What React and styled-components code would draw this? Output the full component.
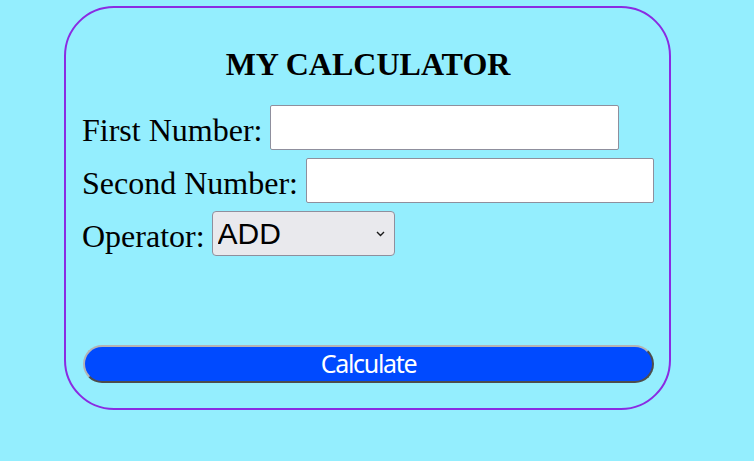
import React from "react";
import styled, { createGlobalStyle } from "styled-components";

const Global = createGlobalStyle`
  html, body { margin: 0; padding: 0; background: #94eefe; }
  body { font-family: "Liberation Serif", "Times New Roman", serif; }
  #root { min-height: 461px; }
  * { box-sizing: border-box; }
`;

const Page = styled.div`
  padding: 6px 0 0 64px;
  height: 461px;
`;

const Card = styled.form`
  width: 607px;
  height: 404px;
  border: 2px solid #8a2be2;
  border-radius: 50px;
  padding: 38px 15px 0 16px;
  display: flex;
  flex-direction: column;
`;

const Title = styled.h1`
  margin: 0 0 22px;
  font-family: "Liberation Serif", "Times New Roman", serif;
  font-size: 32px;
  line-height: 37px;
  font-weight: bold;
  text-align: center;
  color: #000;
`;

const Row = styled.div`
  display: flex;
  align-items: center;
  gap: ${(p) => p.$gap || 8}px;
  height: 45px;
  margin-bottom: ${(p) => p.$after || 8}px;
`;

const Label = styled.label`
  font-family: "Liberation Serif", "Times New Roman", serif;
  font-size: 32px;
  line-height: 37px;
  padding-top: 5px;
  color: #000;
  white-space: nowrap;
`;

const Input = styled.input`
  width: ${(p) => p.$w}px;
  height: 45px;
  border: 1px solid #8f8f9d;
  border-radius: 2px;
  background: #fff;
  padding: 0 6px;
  font-family: "Liberation Sans", Arial, sans-serif;
  font-size: 30px;
  outline: none;
`;

const SelectWrap = styled.span`
  position: relative;
  display: inline-flex;
`;

const Select = styled.select`
  appearance: none;
  -webkit-appearance: none;
  width: 183px;
  height: 45px;
  border: 1px solid #8f8f9d;
  border-radius: 4px;
  background: #e9e9ed;
  padding: 0 0 1px 5px;
  font-family: "Liberation Sans", Arial, sans-serif;
  font-size: 30px;
  color: #000;
  outline: none;
`;

const Chevron = styled.svg`
  position: absolute;
  right: 10px;
  top: 20px;
  pointer-events: none;
`;

const Button = styled.button`
  width: 571px;
  height: 38px;
  margin-left: 1px;
  border: 2px solid;
  border-color: #b4b4b4 #4d4d4d #4d4d4d #b4b4b4;
  border-radius: 19px;
  background: #004aff;
  color: #fff;
  font-family: "Noto Sans", "Open Sans", sans-serif;
  font-size: 25px;
  letter-spacing: -1.3px;
  line-height: 1;
  padding: 0 0 2px;
  cursor: pointer;
`;

export default function App() {
  return (
    <>
      <Global />
      <Page>
        <Card onSubmit={(e) => e.preventDefault()}>
          <Title>MY CALCULATOR</Title>
          <Row>
            <Label htmlFor="first">First Number:</Label>
            <Input id="first" type="text" $w={349} />
          </Row>
          <Row>
            <Label htmlFor="second">Second Number:</Label>
            <Input id="second" type="text" $w={348} />
          </Row>
          <Row $after={89} $gap={7}>
            <Label htmlFor="op">Operator:</Label>
            <SelectWrap>
              <Select id="op" defaultValue="ADD">
                <option value="ADD">ADD</option>
                <option value="SUBTRACT">SUBTRACT</option>
                <option value="MULTIPLY">MULTIPLY</option>
                <option value="DIVIDE">DIVIDE</option>
              </Select>
              <Chevron width="9" height="6" viewBox="0 0 9 6">
                <path d="M1 1 L4.5 4.5 L8 1" fill="none" stroke="#1a1a1a" strokeWidth="1.4" />
              </Chevron>
            </SelectWrap>
          </Row>
          <Button type="submit">Calculate</Button>
        </Card>
      </Page>
    </>
  );
}
